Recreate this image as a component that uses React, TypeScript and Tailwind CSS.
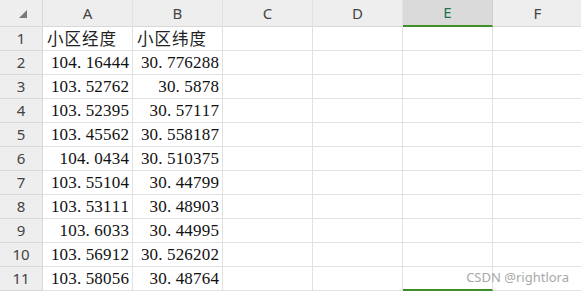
const cols = ["A", "B", "C", "D", "E", "F"];

const rows: [string, string][] = [
  ["小区经度", "小区纬度"],
  ["104.16444", "30.776288"],
  ["103.52762", "30.5878"],
  ["103.52395", "30.57117"],
  ["103.45562", "30.558187"],
  ["104.0434", "30.510375"],
  ["103.55104", "30.44799"],
  ["103.53111", "30.48903"],
  ["103.6033", "30.44995"],
  ["103.56912", "30.526202"],
  ["103.58056", "30.48764"],
];

const sans = "font-['Noto_Sans','Liberation_Sans',sans-serif]";

// fixed-pitch digits, like the spreadsheet's serif font
function Num({ value }: { value: string }) {
  return (
    <span className="flex font-['Liberation_Serif',serif] text-[17px] text-[#111]">
      {value.split("").map((ch, i) => (
        <span key={i} className={`inline-block w-[8.7px] ${ch === "." ? "text-left" : "text-center"}`}>
          {ch}
        </span>
      ))}
    </span>
  );
}

function Corner() {
  return (
    <div className="flex items-center justify-center border-r border-b border-[#d8d8d8] bg-[#eeeeee]">
      <svg width="8" height="8" viewBox="0 0 8 8" className="ml-1 mt-0.5">
        <path d="M8 0 L8 8 L0 8 Z" fill="#7a7a7a" />
      </svg>
    </div>
  );
}

function ColHead({ label }: { label: string }) {
  const sel = label === "E";
  return (
    <div
      className={`flex items-center justify-center border-r text-[15px] ${sans} ${
        sel
          ? "border-[#d0d0d0] border-b-2 border-b-[#3f8f27] bg-[#dadada] text-[#1f7350]"
          : "border-[#e2e2e2] border-b border-b-[#d8d8d8] bg-[#eeeeee] text-[#444]"
      }`}
    >
      {label}
    </div>
  );
}

function Cell({ text, head, sel, last }: { text?: string; head?: boolean; sel?: boolean; last?: boolean }) {
  const isNum = text && !head;
  return (
    <div
      className={`flex items-center overflow-hidden whitespace-nowrap border-r border-[#e1e1e1] ${
        sel && last ? "border-b-2 border-b-[#3f8f27]" : "border-b border-b-[#e1e1e1]"
      } ${isNum ? "justify-end pr-[3px]" : "justify-start pl-1"} ${
        head ? "font-['Noto_Sans_CJK_SC',sans-serif] text-[16.5px] tracking-[1px] text-[#222]" : ""
      }`}
    >
      {isNum ? <Num value={text} /> : text}
    </div>
  );
}

export default function App() {
  return (
    <div className="relative h-[292px] w-[581px] overflow-hidden bg-white">
      <div className="grid grid-cols-[43px_90px_90px_90px_90px_90px_90px] grid-rows-[27px_repeat(11,24px)]">
        <Corner />
        {cols.map((c) => (
          <ColHead key={c} label={c} />
        ))}
        {rows.map((r, i) => (
          <div key={i} className="contents">
            <div
              className={`flex items-center justify-center border-r border-b border-[#d8d8d8] bg-[#eeeeee] text-[15px] text-[#444] ${sans}`}
            >
              {i + 1}
            </div>
            <Cell text={r[0]} head={i === 0} />
            <Cell text={r[1]} head={i === 0} />
            {cols.slice(2).map((c) => (
              <Cell key={c} sel={c === "E"} last={i === rows.length - 1} />
            ))}
          </div>
        ))}
      </div>
      <div className={`absolute right-3 top-[268px] text-[13px] text-[#a8a8a8] ${sans}`}>CSDN @rightlora</div>
    </div>
  );
}
